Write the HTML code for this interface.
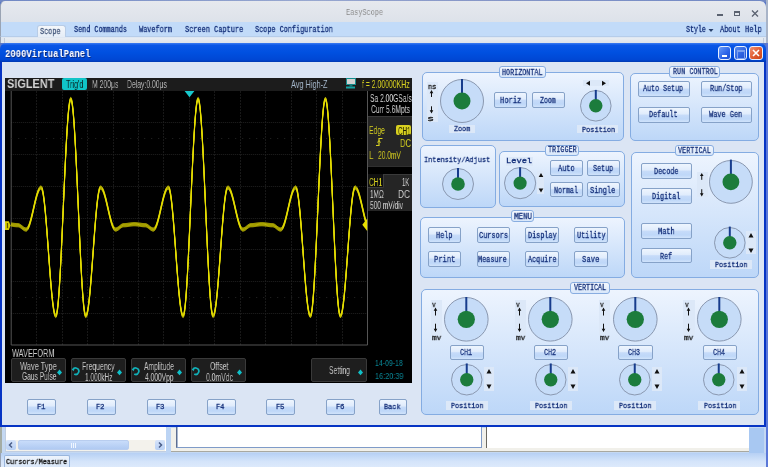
<!DOCTYPE html><html><head><meta charset="utf-8"><style>html,body{margin:0;padding:0;overflow:hidden;}body{width:768px;height:467px;overflow:hidden;position:relative;background:#5a78c8;}</style></head><body><div style="position:absolute;left:0px;top:0px;width:768px;height:2px;background:linear-gradient(90deg,#7088c4,#98a8d0 40%,#8898c8 60%,#7088c4)"></div><div style="position:absolute;left:0px;top:1px;width:766px;height:21px;background:linear-gradient(#e6e9ee,#dde2ea);border-top-right-radius:6px;border-top-left-radius:5px;border-left:1px solid #9aa4b4;box-sizing:border-box"></div><div style="position:absolute;left:766px;top:0px;width:2px;height:43px;background:#a8b4c8"></div><div style="position:absolute;left:766px;top:43px;width:2px;height:424px;background:#5a78d8"></div><div style="position:absolute;left:717px;top:14px;width:6px;height:2px;background:#5a6270"></div><div style="position:absolute;left:734px;top:11px;width:6px;height:5px;border:1px solid #5a6270;border-top-width:2px;box-sizing:border-box"></div><svg style="position:absolute;left:751px;top:10px" width="8" height="7"><path d="M1 0.5L7 6.5M7 0.5L1 6.5" stroke="#5a6270" stroke-width="1.3"/></svg><div style="position:absolute;left:0px;top:22px;width:766px;height:15px;background:#c2dbf9;border-left:1px solid #9aa4b4;border-bottom:1px solid #b6cdea;box-sizing:border-box"></div><div style="position:absolute;left:37px;top:25px;width:29px;height:13px;background:linear-gradient(#f4f7fb,#e4ecf6);border:1px solid #b8cce6;border-bottom:none;border-radius:3px 3px 0 0;box-sizing:border-box"></div><svg style="position:absolute;left:708px;top:28px" width="6" height="5"><path d="M0.5 1L5.5 1L3 4Z" fill="#28406c"/></svg><div style="position:absolute;left:0px;top:37px;width:766px;height:6px;background:#dfe7f2;border-left:1px solid #9aa4b4;box-sizing:border-box"></div><div style="position:absolute;left:4px;top:38px;width:760px;height:5px;background:linear-gradient(#e8edf3,#dde3eb);border-left:1px solid #c4ccd8;border-right:1px solid #c4ccd8;box-sizing:border-box"></div><div style="position:absolute;left:0px;top:43px;width:766px;height:19px;background:linear-gradient(#3d7cf2 0%,#0a56e6 12%,#0050e0 50%,#0047d4 88%,#0038b0 100%);border-radius:6px 6px 0 0"></div><div style="position:absolute;left:718.2px;top:46.2px;width:13.199999999999932px;height:14.199999999999996px;box-sizing:border-box;border:1px solid #e8f0ff;border-radius:3px;background:linear-gradient(135deg,#6a9cf8,#2a62e8 60%,#1e50d0)"><div style="position:absolute;left:2.5px;top:8px;width:5px;height:2px;background:#fff"></div></div><div style="position:absolute;left:733.7px;top:46.2px;width:13.199999999999932px;height:14.199999999999996px;box-sizing:border-box;border:1px solid #e8f0ff;border-radius:3px;background:linear-gradient(135deg,#5a8cf0,#2a60e0 60%,#2050d0)"><div style="position:absolute;left:2.5px;top:2.5px;width:6px;height:6px;border:1px solid #7aa0f0;border-top-width:2px"></div></div><div style="position:absolute;left:749.2px;top:46.2px;width:13.699999999999932px;height:14.199999999999996px;box-sizing:border-box;border:1px solid #e8f0ff;border-radius:3px;background:linear-gradient(135deg,#f09070,#e05a30 55%,#c84418)"><svg style="position:absolute;left:2px;top:2px" width="8" height="8"><path d="M1 1L7 7M7 1L1 7" stroke="#fff" stroke-width="1.6"/></svg></div><div style="position:absolute;left:0px;top:62px;width:766px;height:365px;background:#dbe5f4;border:2px solid #0634c4;border-top:none;box-sizing:border-box"></div><div style="position:absolute;left:5px;top:78px;width:407px;height:305px;background:#000"></div><div style="position:absolute;left:5px;top:78px;width:407px;height:13px;background:#1c1c1c"></div><div style="position:absolute;left:62px;top:78px;width:25px;height:12px;background:#10c4c8;border-radius:2px"></div><svg style="position:absolute;left:344px;top:77px" width="14" height="13"><rect x="2.5" y="1.5" width="9" height="6" fill="#d2d2d2" stroke="#138c8c" stroke-width="1"/><rect x="5.5" y="7.5" width="3" height="2" fill="#127474"/><rect x="2" y="9.5" width="9" height="2" fill="#14a4a4"/></svg><svg style="position:absolute;left:0;top:0" width="768" height="467"><line x1="36.5" y1="91" x2="36.5" y2="345" stroke="#181818" stroke-width="1" stroke-dasharray="2 1"/><line x1="62.5" y1="91" x2="62.5" y2="345" stroke="#181818" stroke-width="1" stroke-dasharray="2 1"/><line x1="87.5" y1="91" x2="87.5" y2="345" stroke="#181818" stroke-width="1" stroke-dasharray="2 1"/><line x1="113.5" y1="91" x2="113.5" y2="345" stroke="#181818" stroke-width="1" stroke-dasharray="2 1"/><line x1="138.5" y1="91" x2="138.5" y2="345" stroke="#181818" stroke-width="1" stroke-dasharray="2 1"/><line x1="163.5" y1="91" x2="163.5" y2="345" stroke="#181818" stroke-width="1" stroke-dasharray="2 1"/><line x1="189.5" y1="91" x2="189.5" y2="345" stroke="#181818" stroke-width="1" stroke-dasharray="2 1"/><line x1="214.5" y1="91" x2="214.5" y2="345" stroke="#181818" stroke-width="1" stroke-dasharray="2 1"/><line x1="240.5" y1="91" x2="240.5" y2="345" stroke="#181818" stroke-width="1" stroke-dasharray="2 1"/><line x1="265.5" y1="91" x2="265.5" y2="345" stroke="#181818" stroke-width="1" stroke-dasharray="2 1"/><line x1="291.5" y1="91" x2="291.5" y2="345" stroke="#181818" stroke-width="1" stroke-dasharray="2 1"/><line x1="316.5" y1="91" x2="316.5" y2="345" stroke="#181818" stroke-width="1" stroke-dasharray="2 1"/><line x1="342.5" y1="91" x2="342.5" y2="345" stroke="#181818" stroke-width="1" stroke-dasharray="2 1"/><line x1="11.2" y1="122.5" x2="367.5" y2="122.5" stroke="#202020" stroke-width="1" stroke-dasharray="1 1"/><line x1="11.2" y1="154.5" x2="367.5" y2="154.5" stroke="#202020" stroke-width="1" stroke-dasharray="1 1"/><line x1="11.2" y1="186.5" x2="367.5" y2="186.5" stroke="#202020" stroke-width="1" stroke-dasharray="1 1"/><line x1="11.2" y1="218.5" x2="367.5" y2="218.5" stroke="#202020" stroke-width="1" stroke-dasharray="1 1"/><line x1="11.2" y1="249.5" x2="367.5" y2="249.5" stroke="#202020" stroke-width="1" stroke-dasharray="1 1"/><line x1="11.2" y1="281.5" x2="367.5" y2="281.5" stroke="#202020" stroke-width="1" stroke-dasharray="1 1"/><line x1="11.2" y1="313.5" x2="367.5" y2="313.5" stroke="#202020" stroke-width="1" stroke-dasharray="1 1"/><path d="M11.2 91 V345 H367.5 V91" fill="none" stroke="#555" stroke-width="1"/><line x1="11.2" y1="138.5" x2="367.5" y2="138.5" stroke="#262626" stroke-width="1" stroke-dasharray="1 6"/><line x1="11.2" y1="297.5" x2="367.5" y2="297.5" stroke="#262626" stroke-width="1" stroke-dasharray="1 6"/><defs><polyline id="wv" points="11.20,224.52 11.70,224.59 12.20,224.66 12.70,224.73 13.20,224.81 13.70,224.88 14.20,224.94 14.70,225.01 15.20,225.06 15.70,225.11 16.20,225.15 16.70,225.17 17.20,225.19 17.70,225.20 18.20,225.22 18.70,225.32 19.20,225.49 19.70,225.73 20.20,226.03 20.70,226.37 21.20,226.75 21.70,227.15 22.20,227.55 22.70,227.95 23.20,228.33 23.70,228.67 24.20,228.97 24.70,229.21 25.20,229.38 25.70,229.48 26.20,229.50 26.70,229.33 27.20,228.95 27.70,228.33 28.20,227.50 28.70,226.46 29.20,225.23 29.70,223.81 30.20,222.22 30.70,220.48 31.20,218.62 31.70,216.64 32.20,214.57 32.70,212.44 33.20,210.26 33.70,208.06 34.20,205.87 34.70,203.70 35.20,201.59 35.70,199.56 36.20,197.62 36.70,195.80 37.20,194.12 37.70,192.60 38.20,191.26 38.70,190.10 39.20,189.14 39.70,188.40 40.20,187.87 40.70,187.57 41.20,187.51 41.70,188.03 42.20,189.27 42.70,191.22 43.20,193.86 43.70,197.17 44.20,201.09 44.70,205.60 45.20,210.63 45.70,216.13 46.20,222.03 46.70,228.28 47.20,234.79 47.70,241.50 48.20,248.32 48.70,255.18 49.20,262.00 49.70,268.71 50.20,275.22 50.70,281.47 51.20,287.37 51.70,292.87 52.20,297.90 52.70,302.41 53.20,306.33 53.70,309.64 54.20,312.28 54.70,314.23 55.20,315.47 55.70,315.99 56.20,315.62 56.70,314.08 57.20,311.37 57.70,307.52 58.20,302.58 58.70,296.59 59.20,289.63 59.70,281.77 60.20,273.10 60.70,263.71 61.20,253.70 61.70,243.18 62.20,232.28 62.70,221.10 63.20,209.77 63.70,198.42 64.20,187.17 64.70,176.14 65.20,165.45 65.70,155.23 66.20,145.58 66.70,136.60 67.20,128.41 67.70,121.08 68.20,114.69 68.70,109.33 69.20,105.04 69.70,101.87 70.20,99.86 70.70,99.02 71.20,99.38 71.70,100.92 72.20,103.63 72.70,107.48 73.20,112.42 73.70,118.41 74.20,125.37 74.70,133.23 75.20,141.90 75.70,151.29 76.20,161.30 76.70,171.82 77.20,182.72 77.70,193.90 78.20,205.23 78.70,216.58 79.20,227.83 79.70,238.86 80.20,249.55 80.70,259.77 81.20,269.42 81.70,278.40 82.20,286.59 82.70,293.92 83.20,300.31 83.70,305.67 84.20,309.96 84.70,313.13 85.20,315.14 85.70,315.98 86.20,315.77 86.70,314.82 87.20,313.15 87.70,310.78 88.20,307.73 88.70,304.05 89.20,299.77 89.70,294.95 90.20,289.63 90.70,283.87 91.20,277.76 91.70,271.34 92.20,264.71 92.70,257.92 93.20,251.06 93.70,244.22 94.20,237.45 94.70,230.85 95.20,224.49 95.70,218.44 96.20,212.77 96.70,207.55 97.20,202.83 97.70,198.66 98.20,195.11 98.70,192.20 99.20,189.96 99.70,188.44 100.20,187.63 100.70,187.52 101.20,187.73 101.70,188.16 102.20,188.82 102.70,189.69 103.20,190.77 103.70,192.04 104.20,193.50 104.70,195.11 105.20,196.88 105.70,198.77 106.20,200.77 106.70,202.85 107.20,205.00 107.70,207.18 108.20,209.38 108.70,211.57 109.20,213.72 109.70,215.82 110.20,217.84 110.70,219.75 111.20,221.54 111.70,223.19 112.20,224.68 112.70,225.99 113.20,227.11 113.70,228.03 114.20,228.73 114.70,229.21 115.20,229.46 115.70,229.49 116.20,229.42 116.70,229.28 117.20,229.07 117.70,228.80 118.20,228.47 118.70,228.11 119.20,227.71 119.70,227.31 120.20,226.91 120.70,226.52 121.20,226.16 121.70,225.84 122.20,225.58 122.70,225.38 123.20,225.26 123.70,225.20 124.20,225.20 124.70,225.18 125.20,225.16 125.70,225.12 126.20,225.08 126.70,225.03 127.20,224.97 127.70,224.90 128.20,224.83 128.70,224.76 129.20,224.69 129.70,224.62 130.20,224.54 130.70,224.48 131.20,224.41 131.70,224.36 132.20,224.31 132.70,224.27 133.20,224.23 133.70,224.21 134.20,224.20 134.70,224.20 135.20,224.21 135.70,224.23 136.20,224.27 136.70,224.31 137.20,224.36 137.70,224.41 138.20,224.48 138.70,224.54 139.20,224.62 139.70,224.69 140.20,224.76 140.70,224.83 141.20,224.90 141.70,224.97 142.20,225.03 142.70,225.08 143.20,225.12 143.70,225.16 144.20,225.18 144.70,225.20 145.20,225.20 145.70,225.26 146.20,225.38 146.70,225.58 147.20,225.84 147.70,226.16 148.20,226.52 148.70,226.91 149.20,227.31 149.70,227.71 150.20,228.11 150.70,228.47 151.20,228.80 151.70,229.07 152.20,229.28 152.70,229.42 153.20,229.49 153.70,229.46 154.20,229.21 154.70,228.73 155.20,228.03 155.70,227.11 156.20,225.99 156.70,224.68 157.20,223.19 157.70,221.54 158.20,219.75 158.70,217.84 159.20,215.82 159.70,213.72 160.20,211.57 160.70,209.38 161.20,207.18 161.70,205.00 162.20,202.85 162.70,200.77 163.20,198.77 163.70,196.88 164.20,195.11 164.70,193.50 165.20,192.04 165.70,190.77 166.20,189.69 166.70,188.82 167.20,188.16 167.70,187.73 168.20,187.52 168.70,187.63 169.20,188.44 169.70,189.96 170.20,192.20 170.70,195.11 171.20,198.66 171.70,202.83 172.20,207.55 172.70,212.77 173.20,218.44 173.70,224.49 174.20,230.85 174.70,237.45 175.20,244.22 175.70,251.06 176.20,257.92 176.70,264.71 177.20,271.34 177.70,277.76 178.20,283.87 178.70,289.63 179.20,294.95 179.70,299.77 180.20,304.05 180.70,307.73 181.20,310.78 181.70,313.15 182.20,314.82 182.70,315.77 183.20,315.98 183.70,315.14 184.20,313.13 184.70,309.96 185.20,305.67 185.70,300.31 186.20,293.92 186.70,286.59 187.20,278.40 187.70,269.42 188.20,259.77 188.70,249.55 189.20,238.86 189.70,227.83 190.20,216.58 190.70,205.23 191.20,193.90 191.70,182.72 192.20,171.82 192.70,161.30 193.20,151.29 193.70,141.90 194.20,133.23 194.70,125.37 195.20,118.41 195.70,112.42 196.20,107.48 196.70,103.63 197.20,100.92 197.70,99.38 198.20,99.02 198.70,99.86 199.20,101.87 199.70,105.04 200.20,109.33 200.70,114.69 201.20,121.08 201.70,128.41 202.20,136.60 202.70,145.58 203.20,155.23 203.70,165.45 204.20,176.14 204.70,187.17 205.20,198.42 205.70,209.77 206.20,221.10 206.70,232.28 207.20,243.18 207.70,253.70 208.20,263.71 208.70,273.10 209.20,281.77 209.70,289.63 210.20,296.59 210.70,302.58 211.20,307.52 211.70,311.37 212.20,314.08 212.70,315.62 213.20,315.99 213.70,315.47 214.20,314.23 214.70,312.28 215.20,309.64 215.70,306.33 216.20,302.41 216.70,297.90 217.20,292.87 217.70,287.37 218.20,281.47 218.70,275.22 219.20,268.71 219.70,262.00 220.20,255.18 220.70,248.32 221.20,241.50 221.70,234.79 222.20,228.28 222.70,222.03 223.20,216.13 223.70,210.63 224.20,205.60 224.70,201.09 225.20,197.17 225.70,193.86 226.20,191.22 226.70,189.27 227.20,188.03 227.70,187.51 228.20,187.57 228.70,187.87 229.20,188.40 229.70,189.14 230.20,190.10 230.70,191.26 231.20,192.60 231.70,194.12 232.20,195.80 232.70,197.62 233.20,199.56 233.70,201.59 234.20,203.70 234.70,205.87 235.20,208.06 235.70,210.26 236.20,212.44 236.70,214.57 237.20,216.64 237.70,218.62 238.20,220.48 238.70,222.22 239.20,223.81 239.70,225.23 240.20,226.46 240.70,227.50 241.20,228.33 241.70,228.95 242.20,229.33 242.70,229.50 243.20,229.48 243.70,229.38 244.20,229.21 244.70,228.97 245.20,228.67 245.70,228.33 246.20,227.95 246.70,227.55 247.20,227.15 247.70,226.75 248.20,226.37 248.70,226.03 249.20,225.73 249.70,225.49 250.20,225.32 250.70,225.22 251.20,225.20 251.70,225.19 252.20,225.17 252.70,225.15 253.20,225.11 253.70,225.06 254.20,225.01 254.70,224.94 255.20,224.88 255.70,224.81 256.20,224.73 256.70,224.66 257.20,224.59 257.70,224.52 258.20,224.45 258.70,224.39 259.20,224.33 259.70,224.29 260.20,224.25 260.70,224.22 261.20,224.21 261.70,224.20 262.20,224.20 262.70,224.22 263.20,224.25 263.70,224.28 264.20,224.32 264.70,224.38 265.20,224.44 265.70,224.50 266.20,224.57 266.70,224.64 267.20,224.72 267.70,224.79 268.20,224.86 268.70,224.93 269.20,224.99 269.70,225.05 270.20,225.10 270.70,225.14 271.20,225.17 271.70,225.19 272.20,225.20 272.70,225.21 273.20,225.30 273.70,225.46 274.20,225.68 274.70,225.96 275.20,226.30 275.70,226.67 276.20,227.07 276.70,227.47 277.20,227.87 277.70,228.26 278.20,228.61 278.70,228.91 279.20,229.16 279.70,229.35 280.20,229.46 280.70,229.50 281.20,229.38 281.70,229.04 282.20,228.47 282.70,227.68 283.20,226.69 283.70,225.49 284.20,224.11 284.70,222.55 285.20,220.84 285.70,219.00 286.20,217.04 286.70,214.99 287.20,212.87 287.70,210.70 288.20,208.50 288.70,206.30 289.20,204.13 289.70,202.01 290.20,199.96 290.70,198.00 291.20,196.16 291.70,194.45 292.20,192.89 292.70,191.51 293.20,190.31 293.70,189.32 294.20,188.53 294.70,187.96 295.20,187.62 295.70,187.50 296.20,187.87 296.70,188.96 297.20,190.77 297.70,193.28 298.20,196.45 298.70,200.26 299.20,204.65 299.70,209.58 300.20,214.99 300.70,220.82 301.20,227.00 301.70,233.47 302.20,240.14 302.70,246.95 303.20,253.81 303.70,260.65 304.20,267.38 304.70,273.94 305.20,280.24 305.70,286.22 306.20,291.81 306.70,296.94 307.20,301.55 307.70,305.60 308.20,309.03 308.70,311.81 309.20,313.90 309.70,315.28 310.20,315.94 310.70,315.79 311.20,314.48 311.70,312.00 312.20,308.38 312.70,303.65 313.20,297.87 313.70,291.10 314.20,283.41 314.70,274.89 315.20,265.64 315.70,255.74 316.20,245.32 316.70,234.48 317.20,223.35 317.70,212.04 318.20,200.69 318.70,189.41 319.20,178.32 319.70,167.56 320.20,157.23 320.70,147.46 321.20,138.34 321.70,129.98 322.20,122.47 322.70,115.89 323.20,110.32 323.70,105.80 324.20,102.41 324.70,100.16 325.20,99.10 325.70,99.21 326.20,100.52 326.70,103.00 327.20,106.62 327.70,111.35 328.20,117.13 328.70,123.90 329.20,131.59 329.70,140.11 330.20,149.36 330.70,159.26 331.20,169.68 331.70,180.52 332.20,191.65 332.70,202.96 333.20,214.31 333.70,225.59 334.20,236.68 334.70,247.44 335.20,257.77 335.70,267.54 336.20,276.66 336.70,285.02 337.20,292.53 337.70,299.11 338.20,304.68 338.70,309.20 339.20,312.59 339.70,314.84 340.20,315.90 340.70,315.87 341.20,315.06 341.70,313.54 342.20,311.30 342.70,308.39 343.20,304.84 343.70,300.67 344.20,295.95 344.70,290.73 345.20,285.06 345.70,279.01 346.20,272.65 346.70,266.05 347.20,259.28 347.70,252.44 348.20,245.58 348.70,238.79 349.20,232.16 349.70,225.74 350.20,219.63 350.70,213.87 351.20,208.55 351.70,203.73 352.20,199.45 352.70,195.77 353.20,192.72 353.70,190.35 354.20,188.68 354.70,187.73 355.20,187.50 355.70,187.67 356.20,188.05 356.70,188.67 357.20,189.50 357.70,190.54 358.20,191.77 358.70,193.19 359.20,194.78 359.70,196.52 360.20,198.38 360.70,200.36 361.20,202.43 361.70,204.56 362.20,206.74 362.70,208.94 363.20,211.13 363.70,213.30 364.20,215.41 364.70,217.44 365.20,219.38 365.70,221.20"/></defs><g fill="none" stroke-linejoin="round"><use href="#wv" stroke="#d8d000" stroke-width="0.9" transform="translate(0,-1.6)"/><use href="#wv" stroke="#d8d000" stroke-width="0.9" transform="translate(0,1.6)"/><use href="#wv" stroke="#e0d800" stroke-width="0.9" transform="translate(0,-0.8)"/><use href="#wv" stroke="#e0d800" stroke-width="0.9" transform="translate(0,0.8)"/><use href="#wv" stroke="#e8e000" stroke-width="0.95" transform="translate(0,0)"/></g><path d="M184.6 91 L194.4 91 L189.5 97.2Z" fill="#18c8cc"/><path d="M367.2 218.5 L362.3 224.7 L367.2 231Z" fill="#e8e000"/><path d="M5 221.2H8.8L10.6 225.6L8.8 230H5Z" fill="#d8d000"/><rect x="6.8" y="223" width="1.3" height="5.2" fill="#5a5400"/></svg><div style="position:absolute;left:368px;top:91px;width:44px;height:26px;background:#000;border-bottom:1px solid #383838;box-sizing:border-box"></div><div style="position:absolute;left:368px;top:117px;width:44px;height:50px;background:#252525;border-bottom:1px solid #303030;box-sizing:border-box"></div><div style="position:absolute;left:396px;top:125px;width:15px;height:10px;background:#d8d020;border-radius:2px"></div><svg style="position:absolute;left:374px;top:137px" width="10" height="10"><path d="M2 8.5H5V1.5H8.5" fill="none" stroke="#d6d020" stroke-width="1.2"/><path d="M3.5 5.5L5 3.5L6.5 5.5" fill="none" stroke="#d6d020" stroke-width="1"/></svg><div style="position:absolute;left:368px;top:174px;width:44px;height:37px;background:#252525;border-top:1px solid #3a3a3a;box-sizing:border-box"></div><div style="position:absolute;left:368px;top:174px;width:16px;height:14px;background:#101010;border-right:1px solid #3c3c3c;border-bottom:1px solid #3c3c3c;border-bottom-right-radius:2px;box-sizing:border-box"></div><div style="position:absolute;left:11px;top:358px;width:55px;height:24px;background:#1e1e1e;border:1px solid #3a3a3a;border-radius:2px;box-sizing:border-box"></div><svg style="position:absolute;left:56.3px;top:368.5px" width="7" height="7"><path d="M3.5 0.6L6 3.4L3.5 6.2L1 3.4Z" fill="#10c0c8"/></svg><div style="position:absolute;left:71px;top:358px;width:55px;height:24px;background:#1e1e1e;border:1px solid #3a3a3a;border-radius:2px;box-sizing:border-box"></div><svg style="position:absolute;left:71px;top:366px" width="10" height="10"><circle cx="4.6" cy="5.2" r="3.2" fill="none" stroke="#10b0b8" stroke-width="1.7" stroke-dasharray="15 5" transform="rotate(200 4.6 5.2)"/><path d="M0.8 3.2L3.6 2.6L2.6 5.2Z" fill="#10b0b8"/></svg><svg style="position:absolute;left:116.3px;top:368.5px" width="7" height="7"><path d="M3.5 0.6L6 3.4L3.5 6.2L1 3.4Z" fill="#10c0c8"/></svg><div style="position:absolute;left:131px;top:358px;width:55px;height:24px;background:#1e1e1e;border:1px solid #3a3a3a;border-radius:2px;box-sizing:border-box"></div><svg style="position:absolute;left:131px;top:366px" width="10" height="10"><circle cx="4.6" cy="5.2" r="3.2" fill="none" stroke="#10b0b8" stroke-width="1.7" stroke-dasharray="15 5" transform="rotate(200 4.6 5.2)"/><path d="M0.8 3.2L3.6 2.6L2.6 5.2Z" fill="#10b0b8"/></svg><svg style="position:absolute;left:176.3px;top:368.5px" width="7" height="7"><path d="M3.5 0.6L6 3.4L3.5 6.2L1 3.4Z" fill="#10c0c8"/></svg><div style="position:absolute;left:191px;top:358px;width:55px;height:24px;background:#1e1e1e;border:1px solid #3a3a3a;border-radius:2px;box-sizing:border-box"></div><svg style="position:absolute;left:191px;top:366px" width="10" height="10"><circle cx="4.6" cy="5.2" r="3.2" fill="none" stroke="#10b0b8" stroke-width="1.7" stroke-dasharray="15 5" transform="rotate(200 4.6 5.2)"/><path d="M0.8 3.2L3.6 2.6L2.6 5.2Z" fill="#10b0b8"/></svg><svg style="position:absolute;left:236.3px;top:368.5px" width="7" height="7"><path d="M3.5 0.6L6 3.4L3.5 6.2L1 3.4Z" fill="#10c0c8"/></svg><div style="position:absolute;left:311px;top:358px;width:56px;height:24px;background:#1e1e1e;border:1px solid #3a3a3a;border-radius:2px;box-sizing:border-box"></div><svg style="position:absolute;left:356.6px;top:368.5px" width="7" height="7"><path d="M3.5 0.6L6 3.4L3.5 6.2L1 3.4Z" fill="#10c0c8"/></svg><div style="position:absolute;left:27px;top:399px;width:29px;height:16px;box-sizing:border-box;border:1px solid #86a2c8;border-radius:2px;background:linear-gradient(#eef5fe 0%,#e0ecfc 42%,#c6dbf9 52%,#bed7f8 78%,#d0e3fb 100%)"></div><div style="position:absolute;left:87px;top:399px;width:29px;height:16px;box-sizing:border-box;border:1px solid #86a2c8;border-radius:2px;background:linear-gradient(#eef5fe 0%,#e0ecfc 42%,#c6dbf9 52%,#bed7f8 78%,#d0e3fb 100%)"></div><div style="position:absolute;left:147px;top:399px;width:29px;height:16px;box-sizing:border-box;border:1px solid #86a2c8;border-radius:2px;background:linear-gradient(#eef5fe 0%,#e0ecfc 42%,#c6dbf9 52%,#bed7f8 78%,#d0e3fb 100%)"></div><div style="position:absolute;left:207px;top:399px;width:29px;height:16px;box-sizing:border-box;border:1px solid #86a2c8;border-radius:2px;background:linear-gradient(#eef5fe 0%,#e0ecfc 42%,#c6dbf9 52%,#bed7f8 78%,#d0e3fb 100%)"></div><div style="position:absolute;left:266px;top:399px;width:29px;height:16px;box-sizing:border-box;border:1px solid #86a2c8;border-radius:2px;background:linear-gradient(#eef5fe 0%,#e0ecfc 42%,#c6dbf9 52%,#bed7f8 78%,#d0e3fb 100%)"></div><div style="position:absolute;left:326px;top:399px;width:29px;height:16px;box-sizing:border-box;border:1px solid #86a2c8;border-radius:2px;background:linear-gradient(#eef5fe 0%,#e0ecfc 42%,#c6dbf9 52%,#bed7f8 78%,#d0e3fb 100%)"></div><div style="position:absolute;left:379px;top:399px;width:28px;height:16px;box-sizing:border-box;border:1px solid #86a2c8;border-radius:2px;background:linear-gradient(#eef5fe 0%,#e0ecfc 42%,#c6dbf9 52%,#bed7f8 78%,#d0e3fb 100%)"></div><div style="position:absolute;left:422px;top:72px;width:202px;height:69px;box-sizing:border-box;border:1px solid #84ace2;border-radius:5px;background:linear-gradient(#edf4fe,#bdd7f8)"></div><div style="position:absolute;left:499px;top:66px;width:47px;height:12px;box-sizing:border-box;border:1px solid #88ade0;border-radius:3px;background:linear-gradient(#f4f8fe,#d8e7fa)"></div><div style="position:absolute;left:630px;top:73px;width:129px;height:68px;box-sizing:border-box;border:1px solid #84ace2;border-radius:5px;background:linear-gradient(#edf4fe,#bdd7f8)"></div><div style="position:absolute;left:669px;top:66px;width:51px;height:12px;box-sizing:border-box;border:1px solid #88ade0;border-radius:3px;background:linear-gradient(#f4f8fe,#d8e7fa)"></div><div style="position:absolute;left:420px;top:145px;width:76px;height:63px;box-sizing:border-box;border:1px solid #84ace2;border-radius:5px;background:linear-gradient(#edf4fe,#bdd7f8)"></div><div style="position:absolute;left:499px;top:151px;width:126px;height:56px;box-sizing:border-box;border:1px solid #84ace2;border-radius:5px;background:linear-gradient(#edf4fe,#bdd7f8)"></div><div style="position:absolute;left:545px;top:145px;width:34px;height:11px;box-sizing:border-box;border:1px solid #88ade0;border-radius:3px;background:linear-gradient(#f4f8fe,#d8e7fa)"></div><div style="position:absolute;left:631px;top:152px;width:128px;height:126px;box-sizing:border-box;border:1px solid #84ace2;border-radius:5px;background:linear-gradient(#edf4fe,#bdd7f8)"></div><div style="position:absolute;left:675px;top:145px;width:39px;height:11px;box-sizing:border-box;border:1px solid #88ade0;border-radius:3px;background:linear-gradient(#f4f8fe,#d8e7fa)"></div><div style="position:absolute;left:420px;top:217px;width:205px;height:61px;box-sizing:border-box;border:1px solid #84ace2;border-radius:5px;background:linear-gradient(#edf4fe,#bdd7f8)"></div><div style="position:absolute;left:511px;top:210px;width:23px;height:12px;box-sizing:border-box;border:1px solid #88ade0;border-radius:3px;background:linear-gradient(#f4f8fe,#d8e7fa)"></div><div style="position:absolute;left:421px;top:289px;width:338px;height:126px;box-sizing:border-box;border:1px solid #84ace2;border-radius:5px;background:linear-gradient(#edf4fe,#bdd7f8)"></div><div style="position:absolute;left:570px;top:282px;width:40px;height:12px;box-sizing:border-box;border:1px solid #88ade0;border-radius:3px;background:linear-gradient(#f4f8fe,#d8e7fa)"></div><div style="position:absolute;left:427px;top:82px;width:11px;height:40px;background:#dce8f8"></div><svg style="position:absolute;left:427px;top:82px" width="12" height="40"><path d="M4.5 10.6V15M4.5 24.3V29.0" stroke="#111" stroke-width="1"/><path d="M2.7 11.3L4.5 8.1L6.3 11.3Z M2.7 28.3L4.5 31.5L6.3 28.3Z" fill="#111"/></svg><svg style="position:absolute;left:438.4px;top:77.1px" width="48.0" height="48.0"><circle cx="24.00" cy="24.00" r="21.50" fill="#c6dcf8" stroke="#8a98b0" stroke-width="1"/><line x1="24.00" y1="1.90" x2="24.00" y2="24.00" stroke="#173c8c" stroke-width="2"/><circle cx="24.00" cy="24.00" r="8.50" fill="#1c7c3c"/></svg><div style="position:absolute;left:449px;top:125px;width:26px;height:8px;background:#dce8f8"></div><div style="position:absolute;left:494px;top:92px;width:33px;height:16px;box-sizing:border-box;border:1px solid #86a2c8;border-radius:2px;background:linear-gradient(#eef5fe 0%,#e0ecfc 42%,#c6dbf9 52%,#bed7f8 78%,#d0e3fb 100%)"></div><div style="position:absolute;left:532px;top:92px;width:33px;height:16px;box-sizing:border-box;border:1px solid #86a2c8;border-radius:2px;background:linear-gradient(#eef5fe 0%,#e0ecfc 42%,#c6dbf9 52%,#bed7f8 78%,#d0e3fb 100%)"></div><div style="position:absolute;left:583px;top:80px;width:26px;height:6px;background:#dce8f8"></div><svg style="position:absolute;left:583px;top:80px" width="26" height="7"><path d="M3 3.3L7 0.8V5.8Z M23 3.3L19 0.8V5.8Z" fill="#111"/></svg><svg style="position:absolute;left:578.3px;top:87.8px" width="35.6" height="35.6"><circle cx="17.80" cy="17.80" r="15.30" fill="#c6dcf8" stroke="#8a98b0" stroke-width="1"/><line x1="17.80" y1="1.90" x2="17.80" y2="17.80" stroke="#173c8c" stroke-width="2"/><circle cx="17.80" cy="17.80" r="6.70" fill="#1c7c3c"/></svg><div style="position:absolute;left:577px;top:125px;width:41px;height:8px;background:#dce8f8"></div><div style="position:absolute;left:638px;top:81px;width:52px;height:16px;box-sizing:border-box;border:1px solid #86a2c8;border-radius:2px;background:linear-gradient(#eef5fe 0%,#e0ecfc 42%,#c6dbf9 52%,#bed7f8 78%,#d0e3fb 100%)"></div><div style="position:absolute;left:701px;top:81px;width:51px;height:16px;box-sizing:border-box;border:1px solid #86a2c8;border-radius:2px;background:linear-gradient(#eef5fe 0%,#e0ecfc 42%,#c6dbf9 52%,#bed7f8 78%,#d0e3fb 100%)"></div><div style="position:absolute;left:638px;top:107px;width:52px;height:16px;box-sizing:border-box;border:1px solid #86a2c8;border-radius:2px;background:linear-gradient(#eef5fe 0%,#e0ecfc 42%,#c6dbf9 52%,#bed7f8 78%,#d0e3fb 100%)"></div><div style="position:absolute;left:701px;top:107px;width:51px;height:16px;box-sizing:border-box;border:1px solid #86a2c8;border-radius:2px;background:linear-gradient(#eef5fe 0%,#e0ecfc 42%,#c6dbf9 52%,#bed7f8 78%,#d0e3fb 100%)"></div><svg style="position:absolute;left:439.8px;top:166.0px" width="36.0" height="36.0"><circle cx="18.00" cy="18.00" r="15.50" fill="#c6dcf8" stroke="#8a98b0" stroke-width="1"/><line x1="18.00" y1="2.00" x2="18.00" y2="18.00" stroke="#173c8c" stroke-width="2"/><circle cx="18.00" cy="18.00" r="6.80" fill="#1c7c3c"/></svg><div style="position:absolute;left:506px;top:157px;width:27px;height:9px;background:#dce8f8"></div><svg style="position:absolute;left:502.0px;top:164.7px" width="36.2" height="36.2"><circle cx="18.10" cy="18.10" r="15.60" fill="#c6dcf8" stroke="#8a98b0" stroke-width="1"/><line x1="18.10" y1="2.30" x2="18.10" y2="18.10" stroke="#173c8c" stroke-width="2"/><circle cx="18.10" cy="18.10" r="6.60" fill="#1c7c3c"/></svg><div style="position:absolute;left:537px;top:171px;width:7px;height:23px;background:#dce8f8"></div><svg style="position:absolute;left:537px;top:171px" width="8" height="24"><path d="M4 2L6.3 6H1.7Z M4 21.5L6.3 17.5H1.7Z" fill="#111"/></svg><div style="position:absolute;left:550px;top:160px;width:33px;height:16px;box-sizing:border-box;border:1px solid #86a2c8;border-radius:2px;background:linear-gradient(#eef5fe 0%,#e0ecfc 42%,#c6dbf9 52%,#bed7f8 78%,#d0e3fb 100%)"></div><div style="position:absolute;left:587px;top:160px;width:33px;height:16px;box-sizing:border-box;border:1px solid #86a2c8;border-radius:2px;background:linear-gradient(#eef5fe 0%,#e0ecfc 42%,#c6dbf9 52%,#bed7f8 78%,#d0e3fb 100%)"></div><div style="position:absolute;left:550px;top:182px;width:33px;height:15px;box-sizing:border-box;border:1px solid #86a2c8;border-radius:2px;background:linear-gradient(#eef5fe 0%,#e0ecfc 42%,#c6dbf9 52%,#bed7f8 78%,#d0e3fb 100%)"></div><div style="position:absolute;left:587px;top:182px;width:33px;height:15px;box-sizing:border-box;border:1px solid #86a2c8;border-radius:2px;background:linear-gradient(#eef5fe 0%,#e0ecfc 42%,#c6dbf9 52%,#bed7f8 78%,#d0e3fb 100%)"></div><div style="position:absolute;left:641px;top:163px;width:51px;height:16px;box-sizing:border-box;border:1px solid #86a2c8;border-radius:2px;background:linear-gradient(#eef5fe 0%,#e0ecfc 42%,#c6dbf9 52%,#bed7f8 78%,#d0e3fb 100%)"></div><div style="position:absolute;left:641px;top:188px;width:51px;height:16px;box-sizing:border-box;border:1px solid #86a2c8;border-radius:2px;background:linear-gradient(#eef5fe 0%,#e0ecfc 42%,#c6dbf9 52%,#bed7f8 78%,#d0e3fb 100%)"></div><div style="position:absolute;left:641px;top:223px;width:51px;height:16px;box-sizing:border-box;border:1px solid #86a2c8;border-radius:2px;background:linear-gradient(#eef5fe 0%,#e0ecfc 42%,#c6dbf9 52%,#bed7f8 78%,#d0e3fb 100%)"></div><div style="position:absolute;left:641px;top:248px;width:51px;height:15px;box-sizing:border-box;border:1px solid #86a2c8;border-radius:2px;background:linear-gradient(#eef5fe 0%,#e0ecfc 42%,#c6dbf9 52%,#bed7f8 78%,#d0e3fb 100%)"></div><div style="position:absolute;left:697px;top:172px;width:11px;height:25px;background:#dce8f8"></div><svg style="position:absolute;left:697px;top:171px" width="10" height="28"><path d="M4.75 4.4V8.8M4.75 18.2V23.0" stroke="#111" stroke-width="1"/><path d="M2.95 5.1L4.75 1.9L6.55 5.1Z M2.95 22.3L4.75 25.5L6.55 22.3Z" fill="#111"/></svg><svg style="position:absolute;left:706.9px;top:158.0px" width="47.8" height="47.8"><circle cx="23.90" cy="23.90" r="21.40" fill="#c6dcf8" stroke="#8a98b0" stroke-width="1"/><line x1="23.90" y1="1.60" x2="23.90" y2="23.90" stroke="#173c8c" stroke-width="2"/><circle cx="23.90" cy="23.90" r="8.40" fill="#1c7c3c"/></svg><svg style="position:absolute;left:712.0px;top:224.8px" width="35.6" height="35.6"><circle cx="17.80" cy="17.80" r="15.30" fill="#c6dcf8" stroke="#8a98b0" stroke-width="1"/><line x1="17.80" y1="1.60" x2="17.80" y2="17.80" stroke="#173c8c" stroke-width="2"/><circle cx="17.80" cy="17.80" r="6.70" fill="#1c7c3c"/></svg><div style="position:absolute;left:746px;top:231px;width:10px;height:23px;background:#dce8f8"></div><svg style="position:absolute;left:746px;top:231px" width="10" height="24"><path d="M5 2L7.5 6.5H2.5Z M5 22L7.5 17.5H2.5Z" fill="#111"/></svg><div style="position:absolute;left:710px;top:260px;width:42px;height:9px;background:#dce8f8"></div><div style="position:absolute;left:428px;top:227px;width:33px;height:16px;box-sizing:border-box;border:1px solid #86a2c8;border-radius:2px;background:linear-gradient(#eef5fe 0%,#e0ecfc 42%,#c6dbf9 52%,#bed7f8 78%,#d0e3fb 100%)"></div><div style="position:absolute;left:428px;top:251px;width:33px;height:16px;box-sizing:border-box;border:1px solid #86a2c8;border-radius:2px;background:linear-gradient(#eef5fe 0%,#e0ecfc 42%,#c6dbf9 52%,#bed7f8 78%,#d0e3fb 100%)"></div><div style="position:absolute;left:477px;top:227px;width:33px;height:16px;box-sizing:border-box;border:1px solid #86a2c8;border-radius:2px;background:linear-gradient(#eef5fe 0%,#e0ecfc 42%,#c6dbf9 52%,#bed7f8 78%,#d0e3fb 100%)"></div><div style="position:absolute;left:477px;top:251px;width:33px;height:16px;box-sizing:border-box;border:1px solid #86a2c8;border-radius:2px;background:linear-gradient(#eef5fe 0%,#e0ecfc 42%,#c6dbf9 52%,#bed7f8 78%,#d0e3fb 100%)"></div><div style="position:absolute;left:525px;top:227px;width:34px;height:16px;box-sizing:border-box;border:1px solid #86a2c8;border-radius:2px;background:linear-gradient(#eef5fe 0%,#e0ecfc 42%,#c6dbf9 52%,#bed7f8 78%,#d0e3fb 100%)"></div><div style="position:absolute;left:525px;top:251px;width:34px;height:16px;box-sizing:border-box;border:1px solid #86a2c8;border-radius:2px;background:linear-gradient(#eef5fe 0%,#e0ecfc 42%,#c6dbf9 52%,#bed7f8 78%,#d0e3fb 100%)"></div><div style="position:absolute;left:574px;top:227px;width:34px;height:16px;box-sizing:border-box;border:1px solid #86a2c8;border-radius:2px;background:linear-gradient(#eef5fe 0%,#e0ecfc 42%,#c6dbf9 52%,#bed7f8 78%,#d0e3fb 100%)"></div><div style="position:absolute;left:574px;top:251px;width:34px;height:16px;box-sizing:border-box;border:1px solid #86a2c8;border-radius:2px;background:linear-gradient(#eef5fe 0%,#e0ecfc 42%,#c6dbf9 52%,#bed7f8 78%,#d0e3fb 100%)"></div><div style="position:absolute;left:431px;top:300px;width:11px;height:35px;background:#dce8f8"></div><svg style="position:absolute;left:430.0px;top:300px" width="12" height="40"><path d="M5.5 10.0V15.5M5.5 23.7V29.5" stroke="#111" stroke-width="1"/><path d="M3.7 10.7L5.5 7.5L7.3 10.7Z M3.7 28.8L5.5 32L7.3 28.8Z" fill="#111"/></svg><svg style="position:absolute;left:442.2px;top:295.0px" width="48.6" height="48.6"><circle cx="24.30" cy="24.30" r="21.80" fill="#c6dcf8" stroke="#8a98b0" stroke-width="1"/><line x1="24.30" y1="2.00" x2="24.30" y2="24.30" stroke="#173c8c" stroke-width="2"/><circle cx="24.30" cy="24.30" r="8.65" fill="#1c7c3c"/></svg><div style="position:absolute;left:450px;top:345px;width:34px;height:15px;box-sizing:border-box;border:1px solid #86a2c8;border-radius:2px;background:linear-gradient(#eef5fe 0%,#e0ecfc 42%,#c6dbf9 52%,#bed7f8 78%,#d0e3fb 100%)"></div><svg style="position:absolute;left:448.6px;top:362.1px" width="35.5" height="35.5"><circle cx="17.75" cy="17.75" r="15.25" fill="#c6dcf8" stroke="#8a98b0" stroke-width="1"/><line x1="17.75" y1="1.45" x2="17.75" y2="17.75" stroke="#173c8c" stroke-width="2"/><circle cx="17.75" cy="17.75" r="6.70" fill="#1c7c3c"/></svg><div style="position:absolute;left:484px;top:367px;width:10px;height:24px;background:#dce8f8"></div><svg style="position:absolute;left:484.0px;top:367px" width="10" height="24"><path d="M5 2L7.5 6.5H2.5Z M5 22L7.5 17.5H2.5Z" fill="#111"/></svg><div style="position:absolute;left:446px;top:401px;width:42px;height:9px;background:#dce8f8"></div><div style="position:absolute;left:515px;top:300px;width:11px;height:35px;background:#dce8f8"></div><svg style="position:absolute;left:514.2px;top:300px" width="12" height="40"><path d="M5.5 10.0V15.5M5.5 23.7V29.5" stroke="#111" stroke-width="1"/><path d="M3.7 10.7L5.5 7.5L7.3 10.7Z M3.7 28.8L5.5 32L7.3 28.8Z" fill="#111"/></svg><svg style="position:absolute;left:526.4px;top:295.0px" width="48.6" height="48.6"><circle cx="24.30" cy="24.30" r="21.80" fill="#c6dcf8" stroke="#8a98b0" stroke-width="1"/><line x1="24.30" y1="2.00" x2="24.30" y2="24.30" stroke="#173c8c" stroke-width="2"/><circle cx="24.30" cy="24.30" r="8.65" fill="#1c7c3c"/></svg><div style="position:absolute;left:534px;top:345px;width:34px;height:15px;box-sizing:border-box;border:1px solid #86a2c8;border-radius:2px;background:linear-gradient(#eef5fe 0%,#e0ecfc 42%,#c6dbf9 52%,#bed7f8 78%,#d0e3fb 100%)"></div><svg style="position:absolute;left:532.9px;top:362.1px" width="35.5" height="35.5"><circle cx="17.75" cy="17.75" r="15.25" fill="#c6dcf8" stroke="#8a98b0" stroke-width="1"/><line x1="17.75" y1="1.45" x2="17.75" y2="17.75" stroke="#173c8c" stroke-width="2"/><circle cx="17.75" cy="17.75" r="6.70" fill="#1c7c3c"/></svg><div style="position:absolute;left:568px;top:367px;width:10px;height:24px;background:#dce8f8"></div><svg style="position:absolute;left:568.2px;top:367px" width="10" height="24"><path d="M5 2L7.5 6.5H2.5Z M5 22L7.5 17.5H2.5Z" fill="#111"/></svg><div style="position:absolute;left:530px;top:401px;width:42px;height:9px;background:#dce8f8"></div><div style="position:absolute;left:599px;top:300px;width:11px;height:35px;background:#dce8f8"></div><svg style="position:absolute;left:598.4px;top:300px" width="12" height="40"><path d="M5.5 10.0V15.5M5.5 23.7V29.5" stroke="#111" stroke-width="1"/><path d="M3.7 10.7L5.5 7.5L7.3 10.7Z M3.7 28.8L5.5 32L7.3 28.8Z" fill="#111"/></svg><svg style="position:absolute;left:610.6px;top:295.0px" width="48.6" height="48.6"><circle cx="24.30" cy="24.30" r="21.80" fill="#c6dcf8" stroke="#8a98b0" stroke-width="1"/><line x1="24.30" y1="2.00" x2="24.30" y2="24.30" stroke="#173c8c" stroke-width="2"/><circle cx="24.30" cy="24.30" r="8.65" fill="#1c7c3c"/></svg><div style="position:absolute;left:618px;top:345px;width:35px;height:15px;box-sizing:border-box;border:1px solid #86a2c8;border-radius:2px;background:linear-gradient(#eef5fe 0%,#e0ecfc 42%,#c6dbf9 52%,#bed7f8 78%,#d0e3fb 100%)"></div><svg style="position:absolute;left:617.0px;top:362.1px" width="35.5" height="35.5"><circle cx="17.75" cy="17.75" r="15.25" fill="#c6dcf8" stroke="#8a98b0" stroke-width="1"/><line x1="17.75" y1="1.45" x2="17.75" y2="17.75" stroke="#173c8c" stroke-width="2"/><circle cx="17.75" cy="17.75" r="6.70" fill="#1c7c3c"/></svg><div style="position:absolute;left:652px;top:367px;width:10px;height:24px;background:#dce8f8"></div><svg style="position:absolute;left:652.4px;top:367px" width="10" height="24"><path d="M5 2L7.5 6.5H2.5Z M5 22L7.5 17.5H2.5Z" fill="#111"/></svg><div style="position:absolute;left:614px;top:401px;width:42px;height:9px;background:#dce8f8"></div><div style="position:absolute;left:683px;top:300px;width:12px;height:35px;background:#dce8f8"></div><svg style="position:absolute;left:682.6px;top:300px" width="12" height="40"><path d="M5.5 10.0V15.5M5.5 23.7V29.5" stroke="#111" stroke-width="1"/><path d="M3.7 10.7L5.5 7.5L7.3 10.7Z M3.7 28.8L5.5 32L7.3 28.8Z" fill="#111"/></svg><svg style="position:absolute;left:694.8px;top:295.0px" width="48.6" height="48.6"><circle cx="24.30" cy="24.30" r="21.80" fill="#c6dcf8" stroke="#8a98b0" stroke-width="1"/><line x1="24.30" y1="2.00" x2="24.30" y2="24.30" stroke="#173c8c" stroke-width="2"/><circle cx="24.30" cy="24.30" r="8.65" fill="#1c7c3c"/></svg><div style="position:absolute;left:703px;top:345px;width:34px;height:15px;box-sizing:border-box;border:1px solid #86a2c8;border-radius:2px;background:linear-gradient(#eef5fe 0%,#e0ecfc 42%,#c6dbf9 52%,#bed7f8 78%,#d0e3fb 100%)"></div><svg style="position:absolute;left:701.2px;top:362.1px" width="35.5" height="35.5"><circle cx="17.75" cy="17.75" r="15.25" fill="#c6dcf8" stroke="#8a98b0" stroke-width="1"/><line x1="17.75" y1="1.45" x2="17.75" y2="17.75" stroke="#173c8c" stroke-width="2"/><circle cx="17.75" cy="17.75" r="6.70" fill="#1c7c3c"/></svg><div style="position:absolute;left:737px;top:367px;width:10px;height:24px;background:#dce8f8"></div><svg style="position:absolute;left:736.6px;top:367px" width="10" height="24"><path d="M5 2L7.5 6.5H2.5Z M5 22L7.5 17.5H2.5Z" fill="#111"/></svg><div style="position:absolute;left:698px;top:401px;width:42px;height:9px;background:#dce8f8"></div><div style="position:absolute;left:0px;top:427px;width:766px;height:26px;background:#c4d8f2;border-left:2px solid #a4aca4;box-sizing:border-box"></div><div style="position:absolute;left:5px;top:427px;width:162px;height:25px;background:#fff;border:1px solid #c0cde0;border-top:none;box-sizing:border-box"></div><div style="position:absolute;left:6px;top:440px;width:159px;height:11px;background:#f3f2ec"></div><div style="position:absolute;left:6px;top:440px;width:10px;height:10px;background:linear-gradient(#d6e4fa,#b8d0f4);border-radius:2px"></div><svg style="position:absolute;left:6px;top:440px" width="10" height="10"><path d="M6 2.5L3.5 5L6 7.5" fill="none" stroke="#4a5e88" stroke-width="1.5"/></svg><div style="position:absolute;left:18px;top:440px;width:111px;height:10px;background:linear-gradient(#c8dcfa,#b0caf2);border:1px solid #b8cdef;border-radius:2px;box-sizing:border-box"></div><div style="position:absolute;left:155px;top:440px;width:10px;height:10px;background:linear-gradient(#d6e4fa,#b8d0f4);border-radius:2px"></div><div style="position:absolute;left:71px;top:443px;width:1px;height:5px;background:#f0f6ff"></div><div style="position:absolute;left:73px;top:443px;width:1px;height:5px;background:#f0f6ff"></div><div style="position:absolute;left:75px;top:443px;width:1px;height:5px;background:#f0f6ff"></div><svg style="position:absolute;left:155px;top:440px" width="10" height="10"><path d="M4 2.5L6.5 5L4 7.5" fill="none" stroke="#4a5e88" stroke-width="1.5"/></svg><div style="position:absolute;left:166px;top:428px;width:5px;height:25px;background:#bcd4f4"></div><div style="position:absolute;left:171px;top:428px;width:311px;height:24px;background:#f1f0ea;border-bottom:1px solid #a8a8a0;box-sizing:border-box"></div><div style="position:absolute;left:176px;top:427px;width:306px;height:21px;background:#fff;border-left:1px solid #5e6e90;border-bottom:1px solid #7f9bc8;border-right:1px solid #7f9bc8;box-shadow:inset 1px 0 0 #a8b8d0;box-sizing:border-box"></div><div style="position:absolute;left:482px;top:428px;width:267px;height:24px;background:#f1f0ea;border-bottom:1px solid #a8a8a0;box-sizing:border-box"></div><div style="position:absolute;left:486px;top:427px;width:263px;height:21px;background:#fff;border-left:1px solid #6a6860;box-sizing:border-box"></div><div style="position:absolute;left:749px;top:428px;width:15px;height:25px;background:#a8c8f2"></div><div style="position:absolute;left:0px;top:453px;width:766px;height:14px;background:linear-gradient(#b6d0f4,#d4e4fa 60%,#dce9fb);border-left:1px solid #9aa4b4;box-sizing:border-box"></div><div style="position:absolute;left:4px;top:455px;width:66px;height:12px;background:linear-gradient(#eef4fc,#d8e6f8);border:1px solid #9ab6dc;border-bottom:none;border-radius:2px 2px 0 0;box-sizing:border-box"></div><div style="position:absolute;left:346.20px;top:6.70px;white-space:nowrap;font-family:'Liberation Mono', monospace;font-size:9px;line-height:13px;font-weight:normal;color:#8a8a8a;transform:scaleX(0.7604);transform-origin:0 0;will-change:transform;">EasyScope</div><div style="position:absolute;left:40.30px;top:25.80px;white-space:nowrap;font-family:'Liberation Mono', monospace;font-size:9px;line-height:13px;font-weight:normal;color:#44587c;transform:scaleX(0.7593);transform-origin:0 0;will-change:transform;-webkit-text-stroke:0.3px #44587c;">Scope</div><div style="position:absolute;left:73.90px;top:24.40px;white-space:nowrap;font-family:'Liberation Mono', monospace;font-size:9px;line-height:13px;font-weight:normal;color:#15307a;transform:scaleX(0.7543);transform-origin:0 0;will-change:transform;-webkit-text-stroke:0.3px #15307a;">Send Commands</div><div style="position:absolute;left:139.40px;top:24.40px;white-space:nowrap;font-family:'Liberation Mono', monospace;font-size:9px;line-height:13px;font-weight:normal;color:#15307a;transform:scaleX(0.7628);transform-origin:0 0;will-change:transform;-webkit-text-stroke:0.3px #15307a;">Waveform</div><div style="position:absolute;left:184.50px;top:24.40px;white-space:nowrap;font-family:'Liberation Mono', monospace;font-size:9px;line-height:13px;font-weight:normal;color:#15307a;transform:scaleX(0.7693);transform-origin:0 0;will-change:transform;-webkit-text-stroke:0.3px #15307a;">Screen Capture</div><div style="position:absolute;left:254.80px;top:24.40px;white-space:nowrap;font-family:'Liberation Mono', monospace;font-size:9px;line-height:13px;font-weight:normal;color:#15307a;transform:scaleX(0.7588);transform-origin:0 0;will-change:transform;-webkit-text-stroke:0.3px #15307a;">Scope Configuration</div><div style="position:absolute;left:685.60px;top:24.40px;white-space:nowrap;font-family:'Liberation Mono', monospace;font-size:9px;line-height:13px;font-weight:normal;color:#15307a;transform:scaleX(0.7370);transform-origin:0 0;will-change:transform;-webkit-text-stroke:0.3px #15307a;">Style</div><div style="position:absolute;left:719.60px;top:24.40px;white-space:nowrap;font-family:'Liberation Mono', monospace;font-size:9px;line-height:13px;font-weight:normal;color:#15307a;transform:scaleX(0.7654);transform-origin:0 0;will-change:transform;-webkit-text-stroke:0.3px #15307a;">About</div><div style="position:absolute;left:744.70px;top:24.40px;white-space:nowrap;font-family:'Liberation Mono', monospace;font-size:9px;line-height:13px;font-weight:normal;color:#15307a;transform:scaleX(0.7762);transform-origin:0 0;will-change:transform;-webkit-text-stroke:0.3px #15307a;">Help</div><div style="position:absolute;left:5.20px;top:48.20px;white-space:nowrap;font-family:'Liberation Mono', monospace;font-size:10px;line-height:14px;font-weight:bold;color:#ffffff;transform:scaleX(0.8896);transform-origin:0 0;will-change:transform;text-shadow:1px 1px 0 #0a2a80;">2000VirtualPanel</div><div style="position:absolute;left:6.80px;top:75.10px;white-space:nowrap;font-family:'Liberation Sans', sans-serif;font-size:13px;line-height:17px;font-weight:bold;color:#d0d0d0;transform:scaleX(0.8404);transform-origin:0 0;will-change:transform;">SIGLENT</div><div style="position:absolute;left:66.00px;top:77.20px;white-space:nowrap;font-family:'Liberation Sans', sans-serif;font-size:11px;line-height:15px;font-weight:normal;color:#0a2a2a;transform:scaleX(0.6481);transform-origin:0 0;will-change:transform;">Trig'd</div><div style="position:absolute;left:92.18px;top:76.80px;white-space:nowrap;font-family:'Liberation Sans', sans-serif;font-size:11px;line-height:15px;font-weight:normal;color:#b4b4b4;transform:scaleX(0.6220);transform-origin:0 0;will-change:transform;">M 200μs</div><div style="position:absolute;left:127.08px;top:76.80px;white-space:nowrap;font-family:'Liberation Sans', sans-serif;font-size:11px;line-height:15px;font-weight:normal;color:#b4b4b4;transform:scaleX(0.6190);transform-origin:0 0;will-change:transform;">Delay:0.00μs</div><div style="position:absolute;left:290.90px;top:77.00px;white-space:nowrap;font-family:'Liberation Sans', sans-serif;font-size:11px;line-height:15px;font-weight:normal;color:#a6b8cc;transform:scaleX(0.6655);transform-origin:0 0;will-change:transform;">Avg High-Z</div><div style="position:absolute;left:361.70px;top:77.00px;white-space:nowrap;font-family:'Liberation Sans', sans-serif;font-size:11px;line-height:15px;font-weight:normal;color:#d6d020;transform:scaleX(0.6250);transform-origin:0 0;will-change:transform;">f = 2.00000KHz</div><div style="position:absolute;left:369.50px;top:92.40px;white-space:nowrap;font-family:'Liberation Sans', sans-serif;font-size:10px;line-height:14px;font-weight:normal;color:#d8d8d8;transform:scaleX(0.6694);transform-origin:0 0;will-change:transform;">Sa 2.00GSa/s</div><div style="position:absolute;left:370.70px;top:103.20px;white-space:nowrap;font-family:'Liberation Sans', sans-serif;font-size:10px;line-height:14px;font-weight:normal;color:#d8d8d8;transform:scaleX(0.6741);transform-origin:0 0;will-change:transform;">Curr 5.6Mpts</div><div style="position:absolute;left:369.32px;top:124.20px;white-space:nowrap;font-family:'Liberation Sans', sans-serif;font-size:10px;line-height:14px;font-weight:normal;color:#d6d020;transform:scaleX(0.6773);transform-origin:0 0;will-change:transform;">Edge</div><div style="position:absolute;left:397.50px;top:124.50px;white-space:nowrap;font-family:'Liberation Sans', sans-serif;font-size:10px;line-height:14px;font-weight:normal;color:#202000;transform:scaleX(0.6250);transform-origin:0 0;will-change:transform;">CH1</div><div style="position:absolute;left:399.55px;top:137.00px;white-space:nowrap;font-family:'Liberation Sans', sans-serif;font-size:10px;line-height:14px;font-weight:normal;color:#d6d020;transform:scaleX(0.7538);transform-origin:0 0;will-change:transform;">DC</div><div style="position:absolute;left:369.04px;top:149.00px;white-space:nowrap;font-family:'Liberation Sans', sans-serif;font-size:10px;line-height:14px;font-weight:normal;color:#d0c820;transform:scaleX(0.7600);transform-origin:0 0;will-change:transform;">L</div><div style="position:absolute;left:377.80px;top:149.00px;white-space:nowrap;font-family:'Liberation Sans', sans-serif;font-size:10px;line-height:14px;font-weight:normal;color:#d0c820;transform:scaleX(0.6629);transform-origin:0 0;will-change:transform;">20.0mV</div><div style="position:absolute;left:369.00px;top:175.70px;white-space:nowrap;font-family:'Liberation Sans', sans-serif;font-size:10px;line-height:14px;font-weight:normal;color:#d6d020;transform:scaleX(0.6550);transform-origin:0 0;will-change:transform;">CH1</div><div style="position:absolute;left:402.41px;top:175.70px;white-space:nowrap;font-family:'Liberation Sans', sans-serif;font-size:10px;line-height:14px;font-weight:normal;color:#d0d0d0;transform:scaleX(0.5909);transform-origin:0 0;will-change:transform;">1K</div><div style="position:absolute;left:369.66px;top:188.20px;white-space:nowrap;font-family:'Liberation Sans', sans-serif;font-size:10px;line-height:14px;font-weight:normal;color:#d0d0d0;transform:scaleX(0.6400);transform-origin:0 0;will-change:transform;">1MΩ</div><div style="position:absolute;left:397.98px;top:188.20px;white-space:nowrap;font-family:'Liberation Sans', sans-serif;font-size:10px;line-height:14px;font-weight:normal;color:#d0d0d0;transform:scaleX(0.8231);transform-origin:0 0;will-change:transform;">DC</div><div style="position:absolute;left:370.00px;top:198.90px;white-space:nowrap;font-family:'Liberation Sans', sans-serif;font-size:10px;line-height:14px;font-weight:normal;color:#d0d0d0;transform:scaleX(0.6600);transform-origin:0 0;will-change:transform;">500 mV/div</div><div style="position:absolute;left:11.70px;top:346.70px;white-space:nowrap;font-family:'Liberation Sans', sans-serif;font-size:10px;line-height:14px;font-weight:normal;color:#d0d0d0;transform:scaleX(0.7351);transform-origin:0 0;will-change:transform;">WAVEFORM</div><div style="position:absolute;left:20.20px;top:360.20px;white-space:nowrap;font-family:'Liberation Sans', sans-serif;font-size:10px;line-height:14px;font-weight:normal;color:#c8c8c8;transform:scaleX(0.7429);transform-origin:0 0;will-change:transform;">Wave Type</div><div style="position:absolute;left:21.70px;top:370.00px;white-space:nowrap;font-family:'Liberation Sans', sans-serif;font-size:10px;line-height:14px;font-weight:normal;color:#c8c8c8;transform:scaleX(0.6635);transform-origin:0 0;will-change:transform;">Gaus Pulse</div><div style="position:absolute;left:82.01px;top:359.50px;white-space:nowrap;font-family:'Liberation Sans', sans-serif;font-size:10px;line-height:14px;font-weight:normal;color:#c8c8c8;transform:scaleX(0.6891);transform-origin:0 0;will-change:transform;">Frequency</div><div style="position:absolute;left:84.85px;top:371.10px;white-space:nowrap;font-family:'Liberation Sans', sans-serif;font-size:10px;line-height:14px;font-weight:normal;color:#c8c8c8;transform:scaleX(0.6488);transform-origin:0 0;will-change:transform;">1.000kHz</div><div style="position:absolute;left:144.10px;top:360.30px;white-space:nowrap;font-family:'Liberation Sans', sans-serif;font-size:10px;line-height:14px;font-weight:normal;color:#c8c8c8;transform:scaleX(0.6705);transform-origin:0 0;will-change:transform;">Amplitude</div><div style="position:absolute;left:145.00px;top:370.60px;white-space:nowrap;font-family:'Liberation Sans', sans-serif;font-size:10px;line-height:14px;font-weight:normal;color:#c8c8c8;transform:scaleX(0.6651);transform-origin:0 0;will-change:transform;">4.000Vpp</div><div style="position:absolute;left:209.70px;top:359.50px;white-space:nowrap;font-family:'Liberation Sans', sans-serif;font-size:10px;line-height:14px;font-weight:normal;color:#c8c8c8;transform:scaleX(0.6926);transform-origin:0 0;will-change:transform;">Offset</div><div style="position:absolute;left:205.50px;top:371.10px;white-space:nowrap;font-family:'Liberation Sans', sans-serif;font-size:10px;line-height:14px;font-weight:normal;color:#c8c8c8;transform:scaleX(0.6821);transform-origin:0 0;will-change:transform;">0.0mVdc</div><div style="position:absolute;left:328.60px;top:364.40px;white-space:nowrap;font-family:'Liberation Sans', sans-serif;font-size:10px;line-height:14px;font-weight:normal;color:#c8c8c8;transform:scaleX(0.6742);transform-origin:0 0;will-change:transform;">Setting</div><div style="position:absolute;left:375.33px;top:357.20px;white-space:nowrap;font-family:'Liberation Sans', sans-serif;font-size:9px;line-height:13px;font-weight:normal;color:#0a8494;transform:scaleX(0.7714);transform-origin:0 0;will-change:transform;">14-09-18</div><div style="position:absolute;left:375.44px;top:369.70px;white-space:nowrap;font-family:'Liberation Sans', sans-serif;font-size:9px;line-height:13px;font-weight:normal;color:#0a8494;transform:scaleX(0.8132);transform-origin:0 0;will-change:transform;">16:20:39</div><div style="position:absolute;left:36.62px;top:401.30px;white-space:nowrap;font-family:'Liberation Mono', monospace;font-size:8px;line-height:12px;font-weight:normal;color:#15307a;transform:scaleX(0.8750);transform-origin:0 0;will-change:transform;-webkit-text-stroke:0.3px #15307a;">F1</div><div style="position:absolute;left:96.42px;top:401.30px;white-space:nowrap;font-family:'Liberation Mono', monospace;font-size:8px;line-height:12px;font-weight:normal;color:#15307a;transform:scaleX(0.8750);transform-origin:0 0;will-change:transform;-webkit-text-stroke:0.3px #15307a;">F2</div><div style="position:absolute;left:156.22px;top:401.30px;white-space:nowrap;font-family:'Liberation Mono', monospace;font-size:8px;line-height:12px;font-weight:normal;color:#15307a;transform:scaleX(0.8750);transform-origin:0 0;will-change:transform;-webkit-text-stroke:0.3px #15307a;">F3</div><div style="position:absolute;left:216.02px;top:401.30px;white-space:nowrap;font-family:'Liberation Mono', monospace;font-size:8px;line-height:12px;font-weight:normal;color:#15307a;transform:scaleX(0.8750);transform-origin:0 0;will-change:transform;-webkit-text-stroke:0.3px #15307a;">F4</div><div style="position:absolute;left:275.82px;top:401.30px;white-space:nowrap;font-family:'Liberation Mono', monospace;font-size:8px;line-height:12px;font-weight:normal;color:#15307a;transform:scaleX(0.8750);transform-origin:0 0;will-change:transform;-webkit-text-stroke:0.3px #15307a;">F5</div><div style="position:absolute;left:335.62px;top:401.30px;white-space:nowrap;font-family:'Liberation Mono', monospace;font-size:8px;line-height:12px;font-weight:normal;color:#15307a;transform:scaleX(0.8750);transform-origin:0 0;will-change:transform;-webkit-text-stroke:0.3px #15307a;">F6</div><div style="position:absolute;left:384.40px;top:401.00px;white-space:nowrap;font-family:'Liberation Mono', monospace;font-size:8px;line-height:12px;font-weight:normal;color:#15307a;transform:scaleX(0.8632);transform-origin:0 0;will-change:transform;-webkit-text-stroke:0.3px #15307a;">Back</div><div style="position:absolute;left:502.40px;top:66.70px;white-space:nowrap;font-family:'Liberation Mono', monospace;font-size:8.5px;line-height:12.5px;font-weight:normal;color:#15307a;transform:scaleX(0.7941);transform-origin:0 0;will-change:transform;-webkit-text-stroke:0.3px #15307a;">HORIZONTAL</div><div style="position:absolute;left:672.50px;top:66.40px;white-space:nowrap;font-family:'Liberation Mono', monospace;font-size:8.5px;line-height:12.5px;font-weight:normal;color:#15307a;transform:scaleX(0.7982);transform-origin:0 0;will-change:transform;-webkit-text-stroke:0.3px #15307a;">RUN CONTROL</div><div style="position:absolute;left:547.70px;top:144.40px;white-space:nowrap;font-family:'Liberation Mono', monospace;font-size:8.5px;line-height:12.5px;font-weight:normal;color:#15307a;transform:scaleX(0.8056);transform-origin:0 0;will-change:transform;-webkit-text-stroke:0.3px #15307a;">TRIGGER</div><div style="position:absolute;left:678.00px;top:145.00px;white-space:nowrap;font-family:'Liberation Mono', monospace;font-size:8.5px;line-height:12.5px;font-weight:normal;color:#15307a;transform:scaleX(0.8049);transform-origin:0 0;will-change:transform;-webkit-text-stroke:0.3px #15307a;">VERTICAL</div><div style="position:absolute;left:513.80px;top:210.70px;white-space:nowrap;font-family:'Liberation Mono', monospace;font-size:8.5px;line-height:12.5px;font-weight:normal;color:#15307a;transform:scaleX(0.8800);transform-origin:0 0;will-change:transform;-webkit-text-stroke:0.3px #15307a;">MENU</div><div style="position:absolute;left:573.80px;top:282.40px;white-space:nowrap;font-family:'Liberation Mono', monospace;font-size:8.5px;line-height:12.5px;font-weight:normal;color:#15307a;transform:scaleX(0.7854);transform-origin:0 0;will-change:transform;-webkit-text-stroke:0.3px #15307a;">VERTICAL</div><div style="position:absolute;left:427.60px;top:81.10px;white-space:nowrap;font-family:'Liberation Mono', monospace;font-size:8px;line-height:12px;font-weight:normal;color:#1a1a1a;transform:scaleX(0.8667);transform-origin:0 0;will-change:transform;-webkit-text-stroke:0.3px #1a1a1a;">ns</div><div style="position:absolute;left:426.73px;top:112.90px;white-space:nowrap;font-family:'Liberation Mono', monospace;font-size:8px;line-height:12px;font-weight:normal;color:#1a1a1a;transform:scaleX(1.4667);transform-origin:0 0;will-change:transform;-webkit-text-stroke:0.3px #1a1a1a;">s</div><div style="position:absolute;left:454.00px;top:123.40px;white-space:nowrap;font-family:'Liberation Mono', monospace;font-size:8px;line-height:12px;font-weight:normal;color:#15307a;transform:scaleX(0.8474);transform-origin:0 0;will-change:transform;-webkit-text-stroke:0.3px #15307a;">Zoom</div><div style="position:absolute;left:499.50px;top:95.40px;white-space:nowrap;font-family:'Liberation Mono', monospace;font-size:9px;line-height:13px;font-weight:normal;color:#15307a;transform:scaleX(0.7923);transform-origin:0 0;will-change:transform;-webkit-text-stroke:0.3px #15307a;">Horiz</div><div style="position:absolute;left:539.60px;top:95.40px;white-space:nowrap;font-family:'Liberation Mono', monospace;font-size:9px;line-height:13px;font-weight:normal;color:#15307a;transform:scaleX(0.7273);transform-origin:0 0;will-change:transform;-webkit-text-stroke:0.3px #15307a;">Zoom</div><div style="position:absolute;left:582.00px;top:123.50px;white-space:nowrap;font-family:'Liberation Mono', monospace;font-size:8px;line-height:12px;font-weight:normal;color:#15307a;transform:scaleX(0.8658);transform-origin:0 0;will-change:transform;-webkit-text-stroke:0.3px #15307a;">Position</div><div style="position:absolute;left:643.00px;top:83.10px;white-space:nowrap;font-family:'Liberation Mono', monospace;font-size:9px;line-height:13px;font-weight:normal;color:#15307a;transform:scaleX(0.7426);transform-origin:0 0;will-change:transform;-webkit-text-stroke:0.3px #15307a;">Auto Setup</div><div style="position:absolute;left:709.70px;top:83.10px;white-space:nowrap;font-family:'Liberation Mono', monospace;font-size:9px;line-height:13px;font-weight:normal;color:#15307a;transform:scaleX(0.7512);transform-origin:0 0;will-change:transform;-webkit-text-stroke:0.3px #15307a;">Run/Stop</div><div style="position:absolute;left:649.20px;top:109.20px;white-space:nowrap;font-family:'Liberation Mono', monospace;font-size:9px;line-height:13px;font-weight:normal;color:#15307a;transform:scaleX(0.7541);transform-origin:0 0;will-change:transform;-webkit-text-stroke:0.3px #15307a;">Default</div><div style="position:absolute;left:709.20px;top:109.20px;white-space:nowrap;font-family:'Liberation Mono', monospace;font-size:9px;line-height:13px;font-weight:normal;color:#15307a;transform:scaleX(0.7698);transform-origin:0 0;will-change:transform;-webkit-text-stroke:0.3px #15307a;">Wave Gen</div><div style="position:absolute;left:423.54px;top:154.00px;white-space:nowrap;font-family:'Liberation Mono', monospace;font-size:8px;line-height:12px;font-weight:normal;color:#15307a;transform:scaleX(0.8613);transform-origin:0 0;will-change:transform;-webkit-text-stroke:0.3px #15307a;">Intensity/Adjust</div><div style="position:absolute;left:505.91px;top:155.20px;white-space:nowrap;font-family:'Liberation Mono', monospace;font-size:8px;line-height:12px;font-weight:normal;color:#15307a;transform:scaleX(1.0870);transform-origin:0 0;will-change:transform;-webkit-text-stroke:0.3px #15307a;">Level</div><div style="position:absolute;left:557.90px;top:163.20px;white-space:nowrap;font-family:'Liberation Mono', monospace;font-size:9px;line-height:13px;font-weight:normal;color:#15307a;transform:scaleX(0.7714);transform-origin:0 0;will-change:transform;-webkit-text-stroke:0.3px #15307a;">Auto</div><div style="position:absolute;left:592.50px;top:163.20px;white-space:nowrap;font-family:'Liberation Mono', monospace;font-size:9px;line-height:13px;font-weight:normal;color:#15307a;transform:scaleX(0.7481);transform-origin:0 0;will-change:transform;-webkit-text-stroke:0.3px #15307a;">Setup</div><div style="position:absolute;left:553.90px;top:184.90px;white-space:nowrap;font-family:'Liberation Mono', monospace;font-size:9px;line-height:13px;font-weight:normal;color:#15307a;transform:scaleX(0.7406);transform-origin:0 0;will-change:transform;-webkit-text-stroke:0.3px #15307a;">Normal</div><div style="position:absolute;left:590.40px;top:184.90px;white-space:nowrap;font-family:'Liberation Mono', monospace;font-size:9px;line-height:13px;font-weight:normal;color:#15307a;transform:scaleX(0.7812);transform-origin:0 0;will-change:transform;-webkit-text-stroke:0.3px #15307a;">Single</div><div style="position:absolute;left:653.90px;top:166.30px;white-space:nowrap;font-family:'Liberation Mono', monospace;font-size:9px;line-height:13px;font-weight:normal;color:#15307a;transform:scaleX(0.7563);transform-origin:0 0;will-change:transform;-webkit-text-stroke:0.3px #15307a;">Decode</div><div style="position:absolute;left:651.60px;top:190.50px;white-space:nowrap;font-family:'Liberation Mono', monospace;font-size:9px;line-height:13px;font-weight:normal;color:#15307a;transform:scaleX(0.7474);transform-origin:0 0;will-change:transform;-webkit-text-stroke:0.3px #15307a;">Digital</div><div style="position:absolute;left:658.10px;top:225.70px;white-space:nowrap;font-family:'Liberation Mono', monospace;font-size:9px;line-height:13px;font-weight:normal;color:#15307a;transform:scaleX(0.7714);transform-origin:0 0;will-change:transform;-webkit-text-stroke:0.3px #15307a;">Math</div><div style="position:absolute;left:660.00px;top:250.50px;white-space:nowrap;font-family:'Liberation Mono', monospace;font-size:9px;line-height:13px;font-weight:normal;color:#15307a;transform:scaleX(0.7437);transform-origin:0 0;will-change:transform;-webkit-text-stroke:0.3px #15307a;">Ref</div><div style="position:absolute;left:715.30px;top:258.80px;white-space:nowrap;font-family:'Liberation Mono', monospace;font-size:8px;line-height:12px;font-weight:normal;color:#15307a;transform:scaleX(0.8474);transform-origin:0 0;will-change:transform;-webkit-text-stroke:0.3px #15307a;">Position</div><div style="position:absolute;left:435.90px;top:230.10px;white-space:nowrap;font-family:'Liberation Mono', monospace;font-size:9px;line-height:13px;font-weight:normal;color:#15307a;transform:scaleX(0.7571);transform-origin:0 0;will-change:transform;-webkit-text-stroke:0.3px #15307a;">Help</div><div style="position:absolute;left:433.50px;top:254.40px;white-space:nowrap;font-family:'Liberation Mono', monospace;font-size:9px;line-height:13px;font-weight:normal;color:#15307a;transform:scaleX(0.7923);transform-origin:0 0;will-change:transform;-webkit-text-stroke:0.3px #15307a;">Print</div><div style="position:absolute;left:478.80px;top:230.10px;white-space:nowrap;font-family:'Liberation Mono', monospace;font-size:9px;line-height:13px;font-weight:normal;color:#15307a;transform:scaleX(0.7676);transform-origin:0 0;will-change:transform;-webkit-text-stroke:0.3px #15307a;">Cursors</div><div style="position:absolute;left:478.40px;top:254.40px;white-space:nowrap;font-family:'Liberation Mono', monospace;font-size:9px;line-height:13px;font-weight:normal;color:#15307a;transform:scaleX(0.7579);transform-origin:0 0;will-change:transform;-webkit-text-stroke:0.3px #15307a;">Measure</div><div style="position:absolute;left:527.50px;top:230.10px;white-space:nowrap;font-family:'Liberation Mono', monospace;font-size:9px;line-height:13px;font-weight:normal;color:#15307a;transform:scaleX(0.7579);transform-origin:0 0;will-change:transform;-webkit-text-stroke:0.3px #15307a;">Display</div><div style="position:absolute;left:527.50px;top:254.40px;white-space:nowrap;font-family:'Liberation Mono', monospace;font-size:9px;line-height:13px;font-weight:normal;color:#15307a;transform:scaleX(0.7500);transform-origin:0 0;will-change:transform;-webkit-text-stroke:0.3px #15307a;">Acquire</div><div style="position:absolute;left:576.60px;top:230.10px;white-space:nowrap;font-family:'Liberation Mono', monospace;font-size:9px;line-height:13px;font-weight:normal;color:#15307a;transform:scaleX(0.7526);transform-origin:0 0;will-change:transform;-webkit-text-stroke:0.3px #15307a;">Utility</div><div style="position:absolute;left:582.00px;top:254.40px;white-space:nowrap;font-family:'Liberation Mono', monospace;font-size:9px;line-height:13px;font-weight:normal;color:#15307a;transform:scaleX(0.8048);transform-origin:0 0;will-change:transform;-webkit-text-stroke:0.3px #15307a;">Save</div><div style="position:absolute;left:432.00px;top:299.10px;white-space:nowrap;font-family:'Liberation Mono', monospace;font-size:8px;line-height:12px;font-weight:normal;color:#1a1a1a;transform:scaleX(0.8000);transform-origin:0 0;will-change:transform;-webkit-text-stroke:0.3px #1a1a1a;">v</div><div style="position:absolute;left:431.70px;top:331.90px;white-space:nowrap;font-family:'Liberation Mono', monospace;font-size:8px;line-height:12px;font-weight:normal;color:#1a1a1a;transform:scaleX(0.9667);transform-origin:0 0;will-change:transform;-webkit-text-stroke:0.3px #1a1a1a;">mv</div><div style="position:absolute;left:459.90px;top:347.40px;white-space:nowrap;font-family:'Liberation Mono', monospace;font-size:9px;line-height:13px;font-weight:normal;color:#15307a;transform:scaleX(0.7438);transform-origin:0 0;will-change:transform;-webkit-text-stroke:0.3px #15307a;">CH1</div><div style="position:absolute;left:451.00px;top:399.50px;white-space:nowrap;font-family:'Liberation Mono', monospace;font-size:8px;line-height:12px;font-weight:normal;color:#15307a;transform:scaleX(0.8474);transform-origin:0 0;will-change:transform;-webkit-text-stroke:0.3px #15307a;">Position</div><div style="position:absolute;left:516.20px;top:299.10px;white-space:nowrap;font-family:'Liberation Mono', monospace;font-size:8px;line-height:12px;font-weight:normal;color:#1a1a1a;transform:scaleX(0.8000);transform-origin:0 0;will-change:transform;-webkit-text-stroke:0.3px #1a1a1a;">v</div><div style="position:absolute;left:515.90px;top:331.90px;white-space:nowrap;font-family:'Liberation Mono', monospace;font-size:8px;line-height:12px;font-weight:normal;color:#1a1a1a;transform:scaleX(0.9667);transform-origin:0 0;will-change:transform;-webkit-text-stroke:0.3px #1a1a1a;">mv</div><div style="position:absolute;left:544.10px;top:347.40px;white-space:nowrap;font-family:'Liberation Mono', monospace;font-size:9px;line-height:13px;font-weight:normal;color:#15307a;transform:scaleX(0.7437);transform-origin:0 0;will-change:transform;-webkit-text-stroke:0.3px #15307a;">CH2</div><div style="position:absolute;left:535.20px;top:399.50px;white-space:nowrap;font-family:'Liberation Mono', monospace;font-size:8px;line-height:12px;font-weight:normal;color:#15307a;transform:scaleX(0.8474);transform-origin:0 0;will-change:transform;-webkit-text-stroke:0.3px #15307a;">Position</div><div style="position:absolute;left:600.40px;top:299.10px;white-space:nowrap;font-family:'Liberation Mono', monospace;font-size:8px;line-height:12px;font-weight:normal;color:#1a1a1a;transform:scaleX(0.8000);transform-origin:0 0;will-change:transform;-webkit-text-stroke:0.3px #1a1a1a;">v</div><div style="position:absolute;left:600.10px;top:331.90px;white-space:nowrap;font-family:'Liberation Mono', monospace;font-size:8px;line-height:12px;font-weight:normal;color:#1a1a1a;transform:scaleX(0.9667);transform-origin:0 0;will-change:transform;-webkit-text-stroke:0.3px #1a1a1a;">mv</div><div style="position:absolute;left:628.30px;top:347.40px;white-space:nowrap;font-family:'Liberation Mono', monospace;font-size:9px;line-height:13px;font-weight:normal;color:#15307a;transform:scaleX(0.7438);transform-origin:0 0;will-change:transform;-webkit-text-stroke:0.3px #15307a;">CH3</div><div style="position:absolute;left:619.40px;top:399.50px;white-space:nowrap;font-family:'Liberation Mono', monospace;font-size:8px;line-height:12px;font-weight:normal;color:#15307a;transform:scaleX(0.8474);transform-origin:0 0;will-change:transform;-webkit-text-stroke:0.3px #15307a;">Position</div><div style="position:absolute;left:684.60px;top:299.10px;white-space:nowrap;font-family:'Liberation Mono', monospace;font-size:8px;line-height:12px;font-weight:normal;color:#1a1a1a;transform:scaleX(0.8000);transform-origin:0 0;will-change:transform;-webkit-text-stroke:0.3px #1a1a1a;">v</div><div style="position:absolute;left:684.30px;top:331.90px;white-space:nowrap;font-family:'Liberation Mono', monospace;font-size:8px;line-height:12px;font-weight:normal;color:#1a1a1a;transform:scaleX(0.9667);transform-origin:0 0;will-change:transform;-webkit-text-stroke:0.3px #1a1a1a;">mv</div><div style="position:absolute;left:712.50px;top:347.40px;white-space:nowrap;font-family:'Liberation Mono', monospace;font-size:9px;line-height:13px;font-weight:normal;color:#15307a;transform:scaleX(0.7438);transform-origin:0 0;will-change:transform;-webkit-text-stroke:0.3px #15307a;">CH4</div><div style="position:absolute;left:703.60px;top:399.50px;white-space:nowrap;font-family:'Liberation Mono', monospace;font-size:8px;line-height:12px;font-weight:normal;color:#15307a;transform:scaleX(0.8474);transform-origin:0 0;will-change:transform;-webkit-text-stroke:0.3px #15307a;">Position</div><div style="position:absolute;left:5.90px;top:455.60px;white-space:nowrap;font-family:'Liberation Mono', monospace;font-size:8px;line-height:12px;font-weight:normal;color:#101010;transform:scaleX(0.8486);transform-origin:0 0;will-change:transform;-webkit-text-stroke:0.3px #101010;">Cursors/Measure</div></body></html>
